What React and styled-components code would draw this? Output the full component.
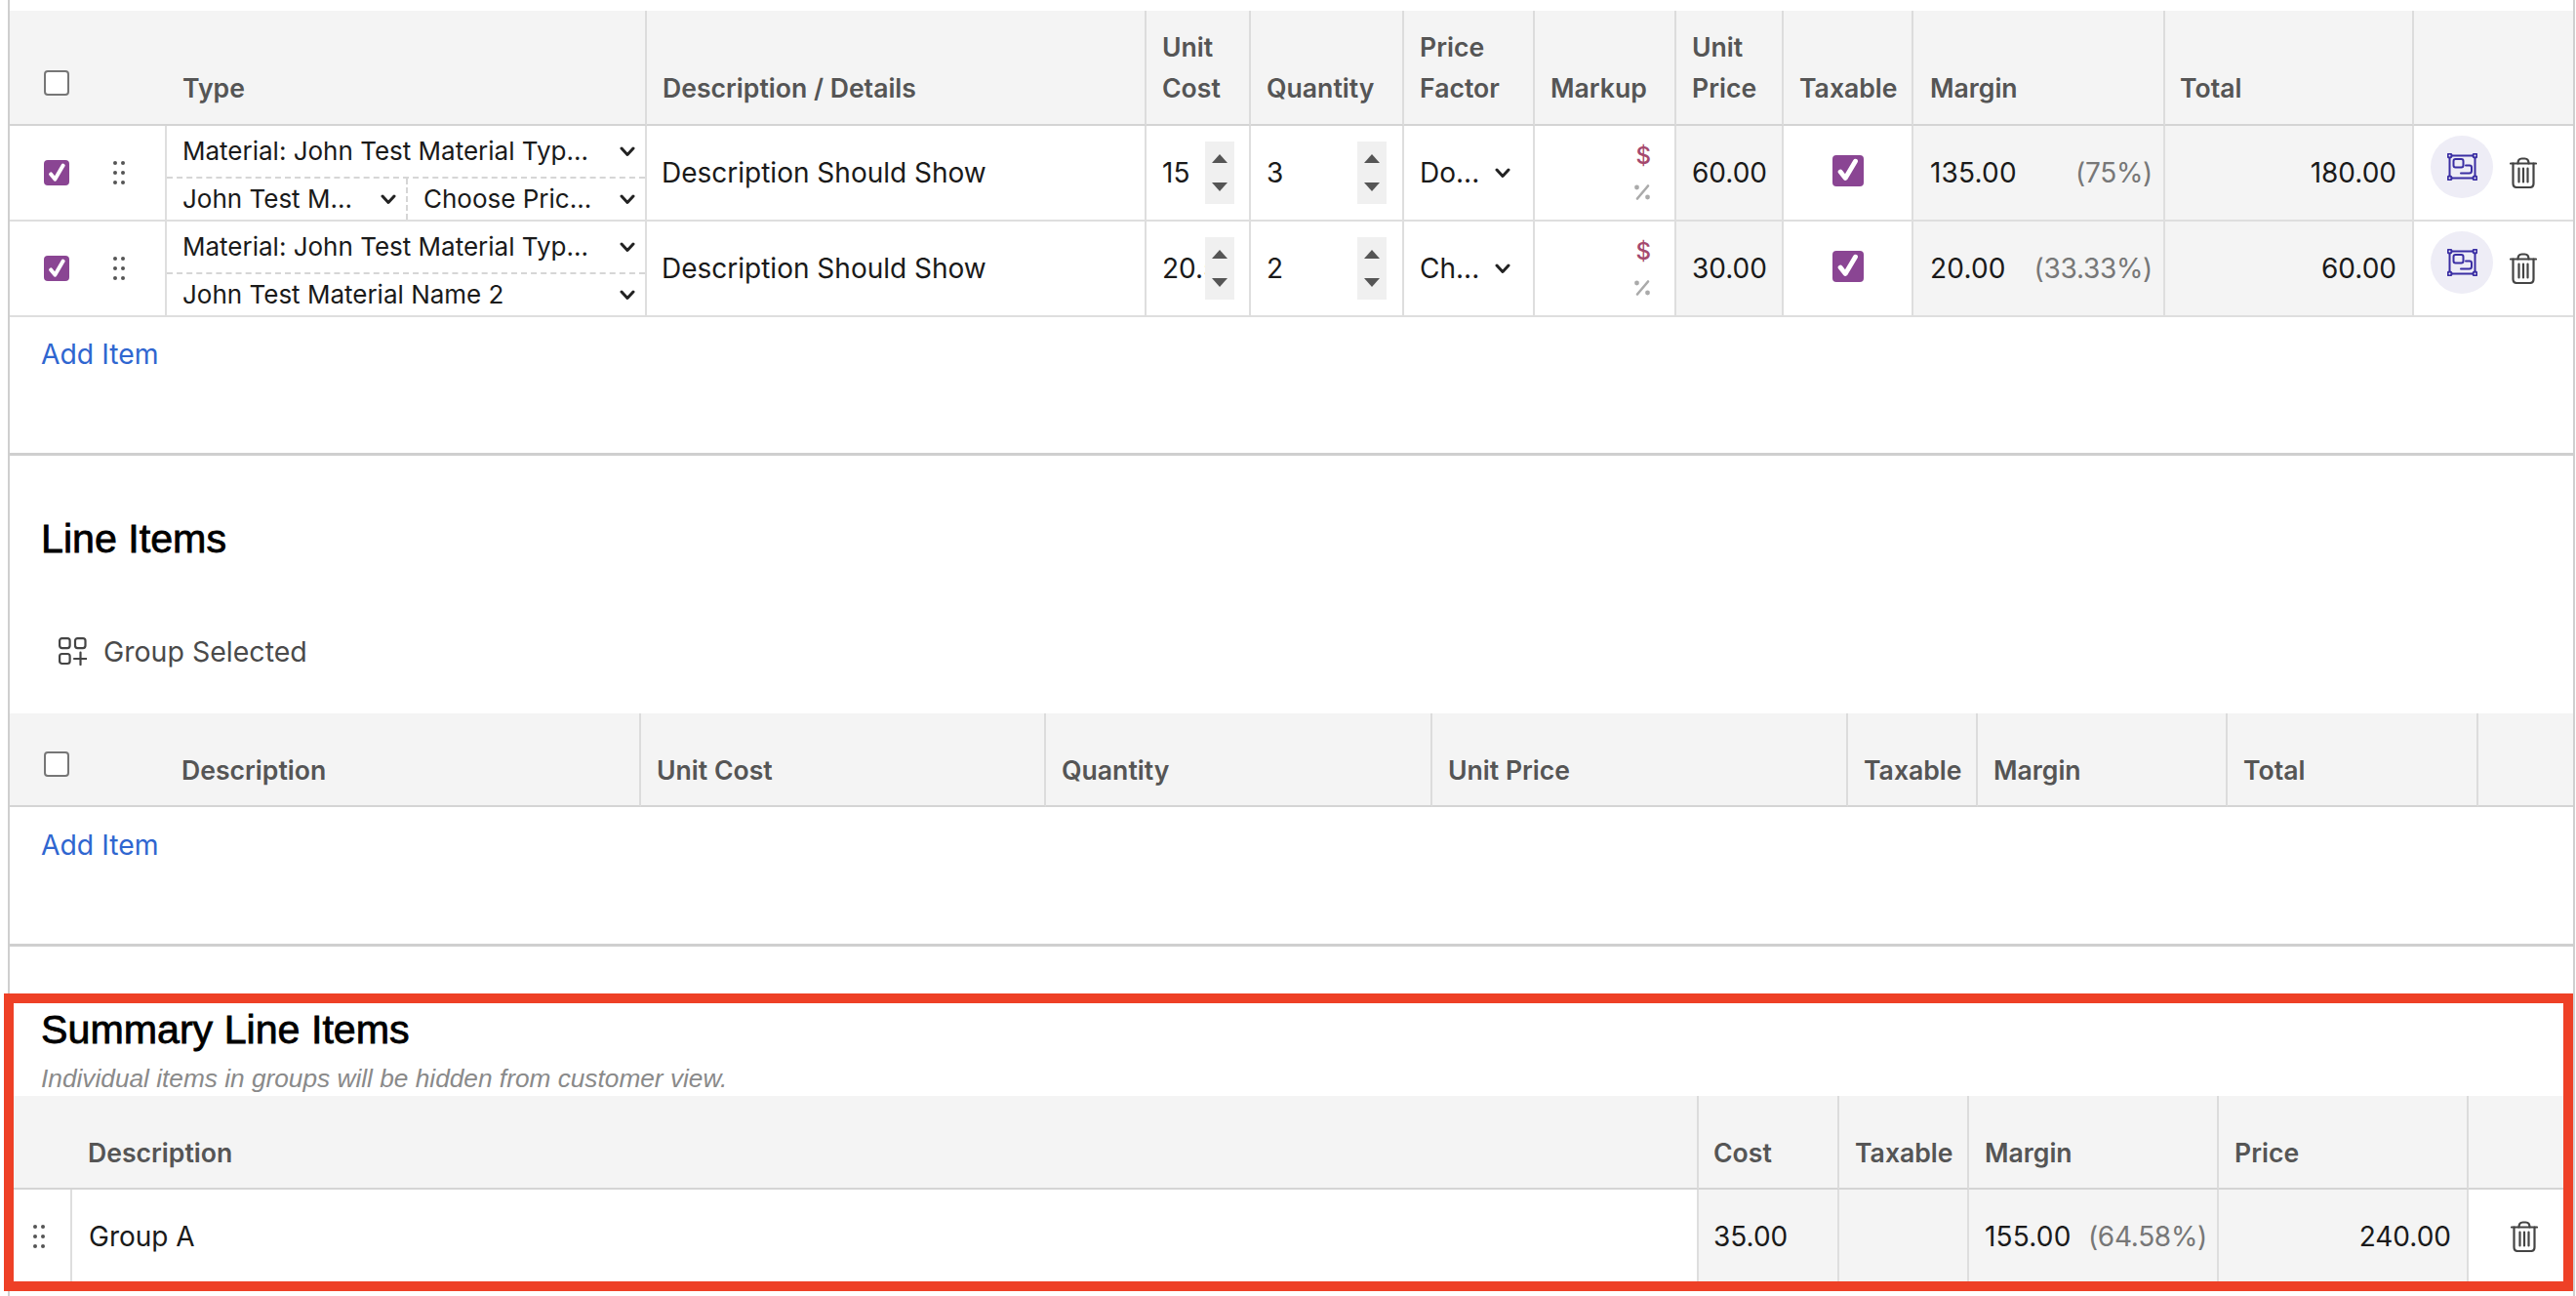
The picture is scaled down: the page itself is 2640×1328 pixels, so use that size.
import React from "react";
import styled, { createGlobalStyle } from "styled-components";

const Global = createGlobalStyle`
  html, body { margin: 0; padding: 0; background: #fff; }
  body { font-family: Inter, "Liberation Sans", sans-serif; color: #1a1a1a; }
`;

const Page = styled.div`
  position: relative;
  width: 2640px;
  height: 1328px;
  overflow: hidden;
`;
const Frame = styled.div`
  box-sizing: border-box;
  width: 2631px;
  height: 1328px;
  margin-left: 8px;
  padding-top: 11px;
  border-left: 2px solid #cfcfcf;
  border-right: 2px solid #cfcfcf;
`;
const Section = styled.section`
  padding-bottom: ${(p) => p.$pb || 0}px;
  padding-top: ${(p) => p.$pt || 0}px;
  border-bottom: ${(p) => (p.$open ? "none" : "3px solid #cfcfcf")};
`;
const Table = styled.table`
  width: 2627px;
  table-layout: fixed;
  border-collapse: separate;
  border-spacing: 0;
`;
const Col = styled.col`
  width: ${(p) => p.$w}px;
`;
const Th = styled.th`
  box-sizing: border-box;
  height: ${(p) => p.$h || 96}px;
  padding: 0 4px ${(p) => p.$pb ?? 15}px ${(p) => p.$pl ?? 16}px;
  background: #f4f4f4;
  border-right: ${(p) => (p.$flat ? "none" : "2px solid #dcdcdc")};
  border-bottom: 2px solid #d4d4d4;
  vertical-align: bottom;
  text-align: left;
  font-size: 26.6px;
  font-weight: 600;
  line-height: 42px;
  color: #555;
`;
const Td = styled.td`
  box-sizing: border-box;
  height: ${(p) => p.$h || 98}px;
  padding: 0 ${(p) => p.$pr ?? 16}px 0 ${(p) => p.$pl ?? 16}px;
  background: ${(p) => (p.$shade ? "#f4f4f4" : "#fff")};
  border-right: ${(p) => (p.$flat ? "none" : "2px solid #dedede")};
  border-bottom: 2px solid #dedede;
  text-align: ${(p) => p.$align || "left"};
  font-size: 28px;
  line-height: 36px;
  color: #1a1a1a;
  white-space: nowrap;
  overflow: hidden;
`;
const HeadCheckRow = styled.div`
  display: flex;
  align-items: center;
`;
const HeadLabel = styled.span`
  margin-left: 115px;
`;
const SelCell = styled.div`
  display: flex;
  align-items: center;
  gap: 45px;
  padding-left: 35px;
`;
const Box = styled.span`
  display: inline-flex;
  align-items: center;
  justify-content: center;
  flex: none;
  box-sizing: border-box;
  width: ${(p) => p.$size || 26}px;
  height: ${(p) => p.$size || 26}px;
  border-radius: 4px;
  background: ${(p) => (p.$on ? "#8a4593" : "#fff")};
  border: ${(p) => (p.$on ? "none" : "2px solid #767676")};
`;
const HeadBox = styled(Box)`
  position: relative;
  top: ${(p) => -p.$lift}px;
`;
const Selects = styled.div`
  display: flex;
  flex-direction: column;
`;
const SelectLine = styled.div`
  display: flex;
  height: ${(p) => p.$h}px;
  border-bottom: ${(p) => (p.$dash ? "2px dashed #d6d6d6" : "none")};
`;
const Select = styled.div`
  flex: ${(p) => (p.$w ? `0 0 ${p.$w}px` : "1")};
  box-sizing: border-box;
  display: flex;
  align-items: center;
  justify-content: space-between;
  padding: 0 10px 0 16px;
  border-right: ${(p) => (p.$dash ? "2px dashed #d6d6d6" : "none")};
  font-size: 26px;
  overflow: hidden;
`;
const Stepper = styled.div`
  display: flex;
  align-items: center;
  justify-content: space-between;
`;
const StepValue = styled.span`
  flex: 1;
  min-width: 0;
  overflow: hidden;
`;
const Spin = styled.div`
  flex: none;
  display: flex;
  flex-direction: column;
  align-items: center;
  justify-content: space-between;
  box-sizing: border-box;
  width: 30px;
  height: 64px;
  padding: 13px 0;
  background: #f0f0f0;
`;
const Tri = styled.span`
  width: 0;
  height: 0;
  border-left: 8px solid transparent;
  border-right: 8px solid transparent;
  ${(p) => (p.$down ? "border-top: 9px solid #555;" : "border-bottom: 9px solid #555;")}
`;
const FactorRow = styled.div`
  display: flex;
  align-items: center;
  gap: 16px;
`;
const MarkupStack = styled.div`
  display: flex;
  flex-direction: column;
  align-items: flex-end;
  gap: 16px;
  padding-right: 8px;
`;
const Dollar = styled.span`
  font-size: 24px;
  line-height: 24px;
  font-weight: 500;
  color: #a5496e;
`;
const MarginRow = styled.div`
  display: flex;
  justify-content: space-between;
`;
const MarginValue = styled.span`
  letter-spacing: 0.2px;
`;
const Pct = styled.span`
  color: #777;
  letter-spacing: -0.3px;
`;
const Actions = styled.div`
  display: flex;
  align-items: center;
  gap: 17px;
  padding-left: 17px;
`;
const Circle = styled.span`
  display: flex;
  flex: none;
  align-items: center;
  justify-content: center;
  width: 64px;
  height: 64px;
  margin-top: -12px;
  border-radius: 50%;
  background: #eeedf6;
`;
const AddLink = styled.a`
  display: block;
  padding: ${(p) => p.$pt}px 0 0 32px;
  font-size: 28.3px;
  line-height: 36px;
  color: #2f66d0;
`;
const Heading = styled.h2`
  margin: 0 0 0 32px;
  font-family: "Liberation Sans", Arial, sans-serif;
  font-size: 41.2px;
  line-height: 48px;
  font-weight: 400;
  color: #000;
  -webkit-text-stroke: 0.8px #000;
`;
const GroupBtn = styled.div`
  display: flex;
  align-items: center;
  gap: 17px;
  height: 48px;
  margin: 67px 0 40px 50px;
  font-size: 28.5px;
  color: #4a4a4a;
`;
const Note = styled.p`
  margin: 8px 0 0 32px;
  font-family: "Liberation Sans", Arial, sans-serif;
  font-size: 26.25px;
  font-style: italic;
  line-height: 36px;
  color: #8a8a8a;
`;
const Highlight = styled.div`
  position: absolute;
  left: 4px;
  top: 1018px;
  box-sizing: border-box;
  width: 2633px;
  height: 305px;
  border: 10px solid #ee4026;
  pointer-events: none;
`;
const Icon = styled.svg`
  flex: none;
  display: block;
`;

const Chevron = () => (
  <Icon width="16" height="11" viewBox="0 0 16 11" fill="none" stroke="#222" strokeWidth="3" strokeLinecap="round" strokeLinejoin="round">
    <path d="M2 2l6 6.5L14 2" />
  </Icon>
);
const Tick = () => (
  <svg width="80%" height="80%" viewBox="0 0 20 20" fill="none" stroke="#fff" strokeWidth="3.8" strokeLinecap="round" strokeLinejoin="round">
    <path d="M4 11l4 5L16 2.500" />
  </svg>
);
const Dots = () => (
  <Icon width="12" height="24" viewBox="0 0 12 24" fill="#555">
    {[2, 12, 22].map((y) => (
      <g key={y}>
        <circle cx="2" cy={y} r="2" />
        <circle cx="10" cy={y} r="2" />
      </g>
    ))}
  </Icon>
);
const Percent = () => (
  <Icon width="18" height="18" viewBox="0 0 18 18" fill="#aaa" stroke="none">
    <path d="M15 2.500L4 15.500" stroke="#aaa" strokeWidth="2.600" strokeLinecap="round" />
    <circle cx="3.500" cy="4" r="2.400" />
    <circle cx="14.500" cy="14" r="2.400" />
  </Icon>
);
const Trash = () => (
  <Icon width="28" height="32" viewBox="0 0 28 32" fill="none" stroke="#444" strokeWidth="2.200" strokeLinecap="round" strokeLinejoin="round">
    <path d="M1 6.500h26" />
    <path d="M8.500 6.500c0-3.500 1.500-5 4-5h3c2.500 0 4 1.500 4 5" />
    <path d="M3.500 6.500V27c0 2.500 1.500 4 4 4h13c2.500 0 4-1.500 4-4V6.500" />
    <path d="M9.500 11.500v14M14 11.500v14M18.500 11.500v14" />
  </Icon>
);
const GroupFrame = () => (
  <Icon width="31" height="28" viewBox="0 0 31 28" fill="none" stroke="#3a2ea3" strokeWidth="2" strokeLinecap="round" strokeLinejoin="round">
    <path d="M5 2.500h21M28.500 5v18M26 25.500H5M2.500 23V5" />
    <circle cx="2.500" cy="2.500" r="2" />
    <circle cx="28.500" cy="2.500" r="2" />
    <circle cx="2.500" cy="25.500" r="2" />
    <circle cx="28.500" cy="25.500" r="2" />
    <rect x="6.500" y="6" width="10" height="8.500" rx="2" />
    <path d="M19 12.500h4c1.500 0 2 .5 2 2V18c0 1.800-.8 2.500-2.500 2.500H14" />
  </Icon>
);
const GroupIcon = () => (
  <Icon width="29" height="29" viewBox="0 0 29 29" fill="none" stroke="#444" strokeWidth="2.200" strokeLinecap="round">
    <rect x="1.100" y="1.100" width="10.500" height="10" rx="2.500" />
    <rect x="17" y="1.100" width="10.500" height="10" rx="2.500" />
    <rect x="1.100" y="17" width="10.500" height="10" rx="2.500" />
    <path d="M22.500 15.500v12.500M16 22h12.500" />
  </Icon>
);

const Check = ({ on, size }) => <Box $on={on} $size={size}>{on && <Tick />}</Box>;

const Pick = ({ children, w, dash }) => (
  <Select $w={w} $dash={dash}>
    <span>{children}</span>
    <Chevron />
  </Select>
);

const Step = ({ value }) => (
  <Stepper>
    <StepValue>{value}</StepValue>
    <Spin>
      <Tri />
      <Tri $down />
    </Spin>
  </Stepper>
);

const rows = [
  { h: 98, cost: "15", qty: "3", factor: "Do...", unit: "60.00", margin: "135.00", pct: "(75%)", total: "180.00", sub: ["John Test M...", "Choose Pric..."] },
  { h: 98, cost: "20.5", qty: "2", factor: "Ch...", unit: "30.00", margin: "20.00", pct: "(33.33%)", total: "60.00", sub: ["John Test Material Name 2"] },
];

export default function App() {
  return (
    <Page>
      <Global />
      <Frame>
        <Section $pb={83}>
          <Table>
            <colgroup>
              {[161, 492, 512, 107, 157, 134, 145, 110, 133, 258, 255, 163].map((w, i) => (
                <Col key={i} $w={w} />
              ))}
            </colgroup>
            <thead>
              <tr>
                <Th $h={118} $pb={16} $flat $pl={35}>
                  <HeadCheckRow><HeadBox $size={26} $lift={13} /></HeadCheckRow>
                </Th>
                <Th $h={118} $pb={16}>Type</Th>
                <Th $h={118} $pb={16}>Description / Details</Th>
                <Th $h={118} $pb={16}>Unit Cost</Th>
                <Th $h={118} $pb={16}>Quantity</Th>
                <Th $h={118} $pb={16}>Price Factor</Th>
                <Th $h={118} $pb={16}>Markup</Th>
                <Th $h={118} $pb={16}>Unit Price</Th>
                <Th $h={118} $pb={16}>Taxable</Th>
                <Th $h={118} $pb={16} $pl={17}>Margin</Th>
                <Th $h={118} $pb={16} $pl={15}>Total</Th>
                <Th $h={118} $flat />
              </tr>
            </thead>
            <tbody>
              {rows.map((r) => (
                <tr key={r.cost}>
                  <Td $h={r.h} $pl={0} $pr={0}>
                    <SelCell>
                      <Check on />
                      <Dots />
                    </SelCell>
                  </Td>
                  <Td $h={r.h} $pl={0} $pr={0}>
                    <Selects>
                      <SelectLine $h={52} $dash>
                        <Pick>Material: John Test Material Typ...</Pick>
                      </SelectLine>
                      <SelectLine $h={r.h - 56}>
                        {r.sub.length === 2 ? (
                          <>
                            <Pick w={247} dash>{r.sub[0]}</Pick>
                            <Pick>{r.sub[1]}</Pick>
                          </>
                        ) : (
                          <Pick>{r.sub[0]}</Pick>
                        )}
                      </SelectLine>
                    </Selects>
                  </Td>
                  <Td $h={r.h} $pl={15}>Description Should Show</Td>
                  <Td $h={r.h} $pr={15}><Step value={r.cost} /></Td>
                  <Td $h={r.h} $pr={16}><Step value={r.qty} /></Td>
                  <Td $h={r.h}>
                    <FactorRow>
                      <span>{r.factor}</span>
                      <Chevron />
                    </FactorRow>
                  </Td>
                  <Td $h={r.h}>
                    <MarkupStack>
                      <Dollar>$</Dollar>
                      <Percent />
                    </MarkupStack>
                  </Td>
                  <Td $h={r.h} $shade>{r.unit}</Td>
                  <Td $h={r.h} $align="center" $pl={0} $pr={0}><Check on size={32} /></Td>
                  <Td $h={r.h} $shade $pl={17} $pr={11}>
                    <MarginRow>
                      <MarginValue>{r.margin}</MarginValue>
                      <Pct>{r.pct}</Pct>
                    </MarginRow>
                  </Td>
                  <Td $h={r.h} $shade $align="right">{r.total}</Td>
                  <Td $h={r.h} $pl={0} $pr={0} $flat>
                    <Actions>
                      <Circle><GroupFrame /></Circle>
                      <Trash />
                    </Actions>
                  </Td>
                </tr>
              ))}
            </tbody>
          </Table>
          <AddLink $pt={20}>Add Item</AddLink>
        </Section>
        <Section $pt={61} $pb={83}>
          <Heading>Line Items</Heading>
          <GroupBtn>
            <GroupIcon />
            Group Selected
          </GroupBtn>
          <Table>
            <colgroup>
              {[647, 415, 396, 426, 133, 256, 257, 97].map((w, i) => (
                <Col key={i} $w={w} />
              ))}
            </colgroup>
            <thead>
              <tr>
                <Th $pl={35}>
                  <HeadCheckRow>
                    <HeadBox $size={26} $lift={6} />
                    <HeadLabel>Description</HeadLabel>
                  </HeadCheckRow>
                </Th>
                <Th>Unit Cost</Th>
                <Th>Quantity</Th>
                <Th>Unit Price</Th>
                <Th>Taxable</Th>
                <Th>Margin</Th>
                <Th>Total</Th>
                <Th $flat />
              </tr>
            </thead>
          </Table>
          <AddLink $pt={21}>Add Item</AddLink>
        </Section>
        <Section $pt={61} $open>
          <Heading>Summary Line Items</Heading>
          <Note>Individual items in groups will be hidden from customer view.</Note>
          <Table>
            <colgroup>
              {[64, 1667, 144, 133, 256, 256, 107].map((w, i) => (
                <Col key={i} $w={w} />
              ))}
            </colgroup>
            <thead>
              <tr>
                <Th colSpan={2} $pl={80}>Description</Th>
                <Th $pl={15}>Cost</Th>
                <Th>Taxable</Th>
                <Th>Margin</Th>
                <Th>Price</Th>
                <Th $flat />
              </tr>
            </thead>
            <tbody>
              <tr>
                <Td $pl={24} $pr={0}><Dots /></Td>
                <Td $pl={17}>Group A</Td>
                <Td $shade $pl={15}>35.00</Td>
                <Td $shade />
                <Td $shade $pr={10}>
                  <MarginRow>
                    <MarginValue>155.00</MarginValue>
                    <Pct>(64.58%)</Pct>
                  </MarginRow>
                </Td>
                <Td $shade $align="right">240.00</Td>
                <Td $flat $pl={43} $pr={0}><Trash /></Td>
              </tr>
            </tbody>
          </Table>
        </Section>
      </Frame>
      <Highlight />
    </Page>
  );
}
